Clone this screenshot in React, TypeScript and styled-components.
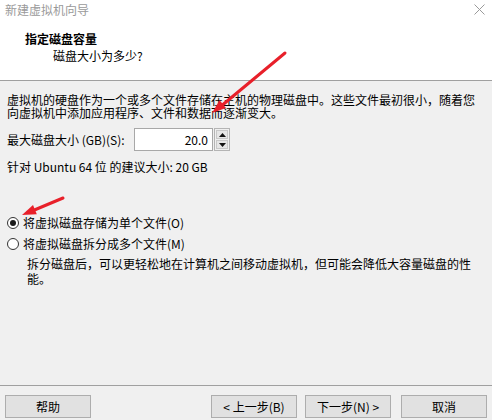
import React, { FC } from "react";
import styled, { createGlobalStyle } from "styled-components";

const GlobalStyle = createGlobalStyle`
  html, body {
    margin: 0;
    padding: 0;
    background: #f0f0f0;
  }
  * {
    box-sizing: border-box;
  }
`;

const Window = styled.div`
  position: relative;
  width: 492px;
  height: 420px;
  display: flex;
  flex-direction: column;
  background: #f0f0f0;
  font-family: "Noto Sans CJK SC", "Noto Sans", sans-serif;
  font-size: 12px;
  color: #000;
  overflow: hidden;
`;

const Header = styled.div`
  height: 81px;
  background: #fff;
  border-bottom: 1px solid #a0a0a0;
  display: flex;
  flex-direction: column;
`;

const TitleBar = styled.div`
  height: 20px;
  display: flex;
  align-items: center;
  justify-content: space-between;
  padding: 0 7px 1px 5px;
  color: #9a9a9a;
  line-height: 18px;
`;

const Heading = styled.div`
  margin: 11px 0 0 25px;
  font-weight: bold;
  line-height: 16px;
`;

const Subtitle = styled.div`
  margin: 1px 0 0 53px;
  line-height: 16px;
`;

const Body = styled.div`
  flex: 1;
  display: flex;
  flex-direction: column;
  padding: 12px 7px 0 7px;
`;

const Paragraph = styled.p`
  margin: 0;
  line-height: 13px;
`;

const SizeRow = styled.div`
  margin-top: 9px;
  display: flex;
  align-items: center;
  height: 23px;
`;

const Label = styled.span`
  width: 127px;
  line-height: 14px;
`;

const NumberBox = styled.div`
  width: 79px;
  height: 23px;
  background: #fff;
  border: 1px solid #a8a8a8;
  display: flex;
  align-items: center;
  justify-content: flex-end;
  padding-right: 4px;
  line-height: 14px;
`;

const Spinner = styled.div`
  margin-left: 1px;
  width: 16px;
  height: 23px;
  display: flex;
  flex-direction: column;
  gap: 1px;
  border: 1px solid #b4b4b4;
  padding: 1px;
  background: #f0f0f0;
`;

const SpinButton = styled.div`
  flex: 1;
  display: flex;
  align-items: center;
  justify-content: center;
  background: #e6e6e6;
  border: 1px solid #c8c8c8;
`;

const Hint = styled.div`
  margin-top: 9px;
  line-height: 14px;
`;

const Options = styled.div`
  margin-top: 38px;
  display: flex;
  flex-direction: column;
`;

const RadioRow = styled.label`
  height: 21px;
  display: flex;
  align-items: center;
  gap: 4px;
  line-height: 14px;
`;

const RadioCircle = styled.span<{ checked?: boolean }>`
  width: 12px;
  height: 12px;
  border-radius: 50%;
  border: 1px solid #333;
  background: #fff;
  display: flex;
  align-items: center;
  justify-content: center;

  &::after {
    content: "";
    width: 6px;
    height: 6px;
    border-radius: 50%;
    background: ${(p) => (p.checked ? "#1a1a1a" : "transparent")};
  }
`;

const Description = styled.p`
  margin: 2px 0 0 20px;
  line-height: 15px;
`;

const Footer = styled.div`
  height: 35px;
  border-top: 1px solid #a0a0a0;
  display: flex;
  align-items: flex-start;
  padding: 9px 5px 0 5px;
`;

const Button = styled.button<{ gapBefore?: number }>`
  width: 86px;
  height: 23px;
  margin-left: ${(p) => p.gapBefore || 0}px;
  background: #e1e1e1;
  border: 1px solid #adadad;
  font-family: inherit;
  font-size: 12px;
  line-height: 14px;
  color: #000;
  padding: 0;
`;

const Annotation = styled.svg`
  position: absolute;
  top: 0;
  left: 0;
  pointer-events: none;
`;

const CloseIcon: FC = () => (
  <svg width="11" height="11" viewBox="0 0 11 11">
    <path d="M0.5 0.5 L10.5 10.5 M10.5 0.5 L0.5 10.5" stroke="#9a9a9a" strokeWidth="1" />
  </svg>
);

const Triangle: FC<{ down?: boolean }> = ({ down }) => (
  <svg width="7" height="4" viewBox="0 0 7 4">
    <path d={down ? "M0 0 L7 0 L3.5 4 Z" : "M0 4 L7 4 L3.5 0 Z"} fill="#111" />
  </svg>
);

export default function App() {
  return (
    <>
      <GlobalStyle />
      <Window>
        <Header>
          <TitleBar>
            <span>新建虚拟机向导</span>
            <CloseIcon />
          </TitleBar>
          <Heading>指定磁盘容量</Heading>
          <Subtitle>磁盘大小为多少?</Subtitle>
        </Header>

        <Body>
          <Paragraph>
            虚拟机的硬盘作为一个或多个文件存储在主机的物理磁盘中。这些文件最初很小，随着您
            <br />
            向虚拟机中添加应用程序、文件和数据而逐渐变大。
          </Paragraph>

          <SizeRow>
            <Label>最大磁盘大小 (GB)(S):</Label>
            <NumberBox>20.0</NumberBox>
            <Spinner>
              <SpinButton>
                <Triangle />
              </SpinButton>
              <SpinButton>
                <Triangle down />
              </SpinButton>
            </Spinner>
          </SizeRow>

          <Hint>针对 Ubuntu 64 位 的建议大小: 20 GB</Hint>

          <Options>
            <RadioRow>
              <RadioCircle checked />
              将虚拟磁盘存储为单个文件(O)
            </RadioRow>
            <RadioRow>
              <RadioCircle />
              将虚拟磁盘拆分成多个文件(M)
            </RadioRow>
            <Description>
              拆分磁盘后，可以更轻松地在计算机之间移动虚拟机，但可能会降低大容量磁盘的性
              <br />
              能。
            </Description>
          </Options>
        </Body>

        <Footer>
          <Button>帮助</Button>
          <Button gapBefore={120}>&lt; 上一步(B)</Button>
          <Button gapBefore={8}>下一步(N) &gt;</Button>
          <Button gapBefore={10}>取消</Button>
        </Footer>

        <Annotation width="492" height="420" viewBox="0 0 492 420">
          <line x1="285" y1="53" x2="220" y2="107" stroke="#e8202a" strokeWidth="3" strokeLinecap="round" />
          <polygon points="212,113 226,108 219.6,100.2" fill="#e8202a" />
          <line x1="63" y1="198" x2="32" y2="211" stroke="#e8202a" strokeWidth="3" strokeLinecap="round" />
          <polygon points="22,215 36.8,214.2 33,205" fill="#e8202a" />
        </Annotation>
      </Window>
    </>
  );
}
